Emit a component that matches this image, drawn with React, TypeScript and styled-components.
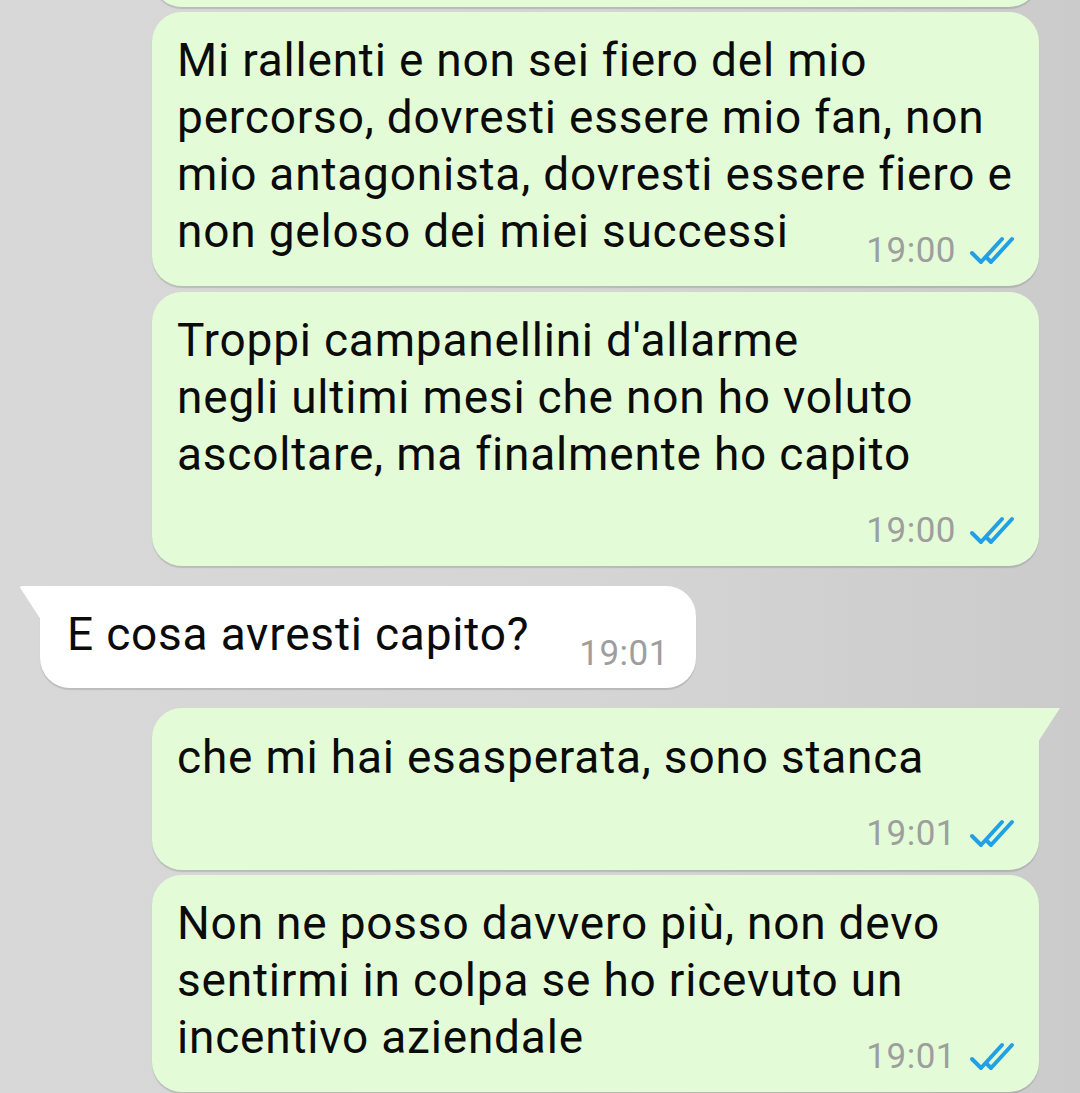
import React from "react";
import styled, { createGlobalStyle, css } from "styled-components";

const GlobalStyle = createGlobalStyle`
  html, body {
    margin: 0;
    padding: 0;
  }
  body {
    background: #d5d5d5;
    font-family: Roboto, "Noto Sans", "Liberation Sans", sans-serif;
  }
`;

const Screen = styled.div`
  width: 1080px;
  height: 1093px;
  overflow: hidden;
  background: linear-gradient(90deg, #d8d8d8 0%, #d5d5d5 55%, #cbcbcb 100%);
`;

// the list is scrolled: only the bottom of the previous bubble shows
const Thread = styled.div`
  display: flex;
  flex-direction: column;
  margin-top: -113px;
`;

const Row = styled.div<{ $out?: boolean; $gap: number }>`
  display: flex;
  justify-content: ${({ $out }) => ($out ? "flex-end" : "flex-start")};
  padding: ${({ $out }) => ($out ? "0 41px 0 152px" : "0 41px 0 40px")};
  margin-top: ${({ $gap }) => $gap}px;
`;

const tailIn = css`
  border-top-left-radius: 0;
  &::before {
    content: "";
    position: absolute;
    top: 0;
    left: -21px;
    width: 22px;
    height: 34px;
    background: inherit;
    clip-path: polygon(0 0, 100% 0, 100% 100%);
    border-top-left-radius: 4px;
  }
`;

const tailOut = css`
  border-top-right-radius: 0;
  &::after {
    content: "";
    position: absolute;
    top: 0;
    right: -21px;
    width: 22px;
    height: 34px;
    background: inherit;
    clip-path: polygon(0 0, 100% 0, 0 100%);
  }
`;

const Bubble = styled.div<{ $out?: boolean; $tail?: boolean }>`
  position: relative;
  display: flow-root;
  box-sizing: border-box;
  max-width: 100%;
  padding: ${({ $out, $tail }) =>
    $out ? ($tail ? "21px 24px 27px 25px" : "20px 24px 26px 25px") : "20px 27px 25px 27px"};
  background: ${({ $out }) => ($out ? "#e3fcd7" : "#ffffff")};
  border-radius: 30px;
  box-shadow: 0 2px 1px rgba(0, 0, 0, 0.13);
  ${({ $tail, $out }) => ($tail ? ($out ? tailOut : tailIn) : "")}
`;

const EarlierBubble = styled.div`
  width: 100%;
  height: 120px;
  background: #e3fcd7;
  border-radius: 30px;
  box-shadow: 0 2px 1px rgba(0, 0, 0, 0.13);
`;

const Text = styled.div`
  font-size: 46px;
  line-height: 57px;
  letter-spacing: 0.8px;
  color: #0b0b0b;
  white-space: pre-line;
`;

const Meta = styled.span`
  float: right;
  position: relative;
  top: 19px;
  display: flex;
  align-items: center;
  gap: 13px;
  height: 57px;
  margin-left: 50px;
  font-size: 35px;
  letter-spacing: 0.5px;
  color: #9e9e9e;
  white-space: nowrap;
`;

const Ticks = () => (
  <svg width="46" height="30" viewBox="0 0 46 30" fill="none">
    <path d="M3 17 L12 26 L33 3" stroke="#22a0e6" strokeWidth="4" strokeLinecap="round" strokeLinejoin="round" />
    <path d="M18 22 L22 26 L43 3" stroke="#22a0e6" strokeWidth="4" strokeLinecap="round" strokeLinejoin="round" />
  </svg>
);

type Msg = { out: boolean; tail?: boolean; gap: number; text: string; time: string };

const messages: Msg[] = [
  {
    out: true,
    gap: 5,
    text: "Mi rallenti e non sei fiero del mio percorso, dovresti essere mio fan, non mio antagonista, dovresti essere fiero e non geloso dei miei successi",
    time: "19:00",
  },
  {
    out: true,
    gap: 6,
    text: "Troppi campanellini d'allarme\nnegli ultimi mesi che non ho voluto ascoltare, ma finalmente ho capito",
    time: "19:00",
  },
  { out: false, tail: true, gap: 20, text: "E cosa avresti capito?", time: "19:01" },
  { out: true, tail: true, gap: 20, text: "che mi hai esasperata, sono stanca", time: "19:01" },
  {
    out: true,
    gap: 5,
    text: "Non ne posso davvero più, non devo sentirmi in colpa se ho ricevuto un incentivo aziendale",
    time: "19:01",
  },
];

export default function App() {
  return (
    <Screen>
      <GlobalStyle />
      <Thread>
        <Row $out $gap={0}>
          <EarlierBubble />
        </Row>
        {messages.map((m, i) => (
          <Row key={i} $out={m.out} $gap={m.gap}>
            <Bubble $out={m.out} $tail={m.tail}>
              <Text>
                {m.text}
                <Meta>
                  {m.time}
                  {m.out && <Ticks />}
                </Meta>
              </Text>
            </Bubble>
          </Row>
        ))}
      </Thread>
    </Screen>
  );
}
